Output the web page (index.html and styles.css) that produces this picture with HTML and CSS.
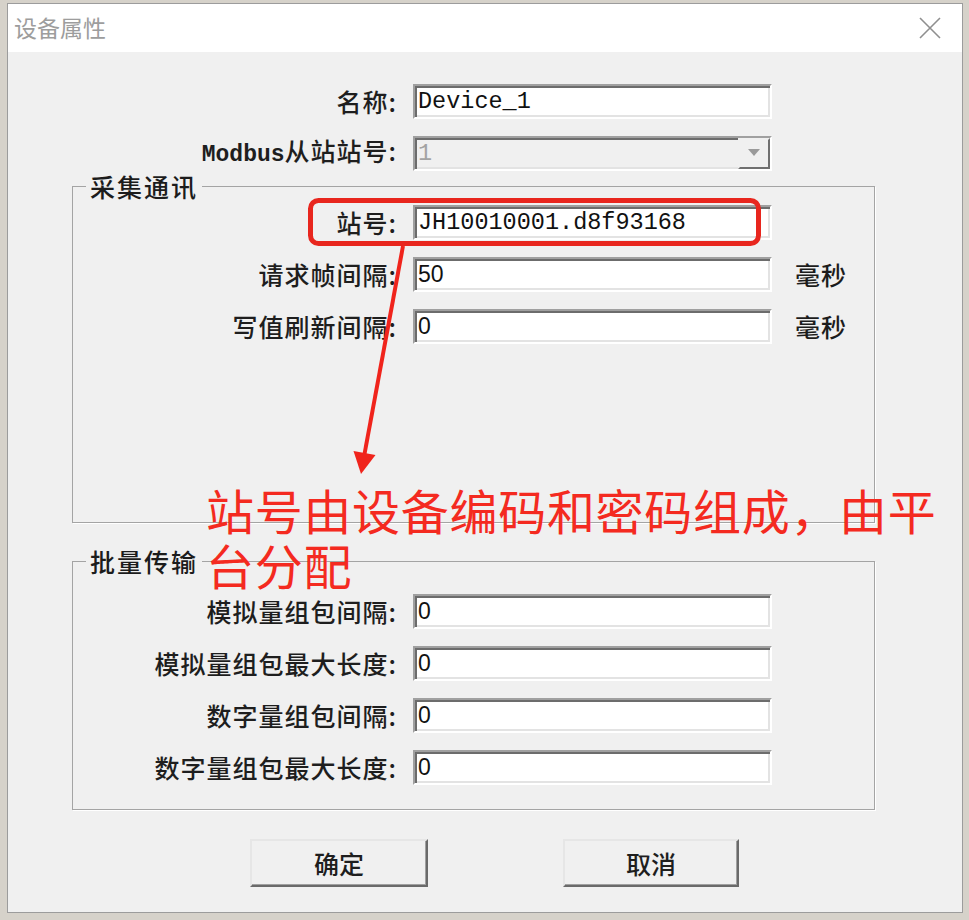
FILE: index.html
```html
<!DOCTYPE html>
<html>
<head>
    <meta charset="utf-8">
    <link rel="stylesheet" href="styles.css">
</head>
<body>
    <div class="dialog">
        <div class="title-bar">
            <span class="title">设备属性</span>
            <svg class="close" width="24" height="24" viewBox="0 0 24 24">
                <path d="M2 2 L22 22 M22 2 L2 22"></path>
            </svg>
        </div>

        <div class="dialog-body">
            <div class="row">
                <label class="label">名称:</label>
                <div class="field mono">Device_1</div>
            </div>
            <div class="row row-combo">
                <label class="label"><span class="latin">Modbus</span>从站站号:</label>
                <div class="field combo">
                    <span class="mono">1</span>
                    <span class="drop-btn">
                        <svg width="12" height="8" viewBox="0 0 12 8"><path d="M0 0 H12 L6 7 Z"></path></svg>
                    </span>
                </div>
            </div>

            <fieldset class="group group-comm">
                <legend>采集通讯</legend>
                <div class="row">
                    <label class="label">站号:</label>
                    <div class="field mono">JH10010001.d8f93168</div>
                </div>
                <div class="row">
                    <label class="label">请求帧间隔:</label>
                    <div class="field num">50</div>
                    <span class="unit">毫秒</span>
                </div>
                <div class="row">
                    <label class="label">写值刷新间隔:</label>
                    <div class="field num">0</div>
                    <span class="unit">毫秒</span>
                </div>
            </fieldset>

            <fieldset class="group group-batch">
                <legend>批量传输</legend>
                <div class="row">
                    <label class="label">模拟量组包间隔:</label>
                    <div class="field num">0</div>
                </div>
                <div class="row">
                    <label class="label">模拟量组包最大长度:</label>
                    <div class="field num">0</div>
                </div>
                <div class="row">
                    <label class="label">数字量组包间隔:</label>
                    <div class="field num">0</div>
                </div>
                <div class="row">
                    <label class="label">数字量组包最大长度:</label>
                    <div class="field num">0</div>
                </div>
            </fieldset>

            <div class="buttons">
                <button class="btn btn-ok">确定</button>
                <button class="btn btn-cancel">取消</button>
            </div>
        </div>

        <!-- red markup drawn over the dialog -->
        <svg class="marks" width="956" height="910" viewBox="0 0 956 910">
            <rect x="302.5" y="196.5" width="448" height="43" rx="8" ry="8"></rect>
            <line x1="395" y1="242" x2="356.5" y2="450"></line>
            <polygon points="353,470 367.5,451 345.5,447"></polygon>
        </svg>
        <div class="note">站号由设备编码和密码组成，由平台分配</div>
    </div>
</body>
</html>
```

FILE: styles.css
```css
* {
    margin: 0;
    padding: 0;
    box-sizing: border-box;
}

body {
    width: 969px;
    height: 920px;
    overflow: hidden;
    background: #d6d2ca;
    font-family: "Noto Sans CJK SC", "Noto Sans", sans-serif;
    color: #1c1c1c;
}

.dialog {
    position: relative;
    margin: 3px 0 0 7px;
    width: 956px;
    height: 910px;
    background: #f0f0f0;
    border: 1px solid #9c9c9c;
}

.title-bar {
    height: 48px;
    background: #fff;
    display: flex;
    align-items: center;
    justify-content: space-between;
    padding: 0 20px 0 6px;
}

.title {
    font-size: 23px;
    color: #9d9d9d;
    line-height: 1;
    margin-top: -2px;
}

.close path {
    stroke: #8f8f8f;
    stroke-width: 1.6;
    fill: none;
}

.dialog-body {
    padding-top: 32px;
    --label-w: 389px;
}

.row {
    display: grid;
    grid-template-columns: var(--label-w) 359px auto;
    column-gap: 16px;
    align-items: center;
    height: 35px;
}

.row-combo {
    margin-top: 14px;
}

.label {
    text-align: right;
    font-size: 25px;
    font-weight: 500;
    letter-spacing: 1px;
    line-height: 35px;
    color: #1e1e1e;
    white-space: nowrap;
}

.latin {
    font-family: "Liberation Mono", monospace;
    font-weight: 700;
    font-size: 23px;
    letter-spacing: 0;
}

.field {
    height: 35px;
    background: #fff;
    border: 2px solid;
    border-color: #a0a0a0 #fff #fff #a0a0a0;
    box-shadow: inset 2px 2px 0 #6c6c6c, inset -2px -2px 0 #e3e3e3;
    padding-left: 3px;
    line-height: 31px;
    color: #111;
    white-space: nowrap;
    overflow: hidden;
}

.mono {
    font-family: "Liberation Mono", monospace;
    font-size: 23.5px;
}

.num {
    font-family: "Liberation Sans", sans-serif;
    font-size: 23px;
}

.combo {
    background: #f0f0f0;
    display: flex;
    justify-content: space-between;
    color: #a3a3a3;
}

.drop-btn {
    width: 32px;
    height: 31px;
    border: 2px solid;
    border-color: #f0f0f0 #707070 #707070 #f0f0f0;
    background: #f0f0f0;
    display: flex;
    align-items: center;
    justify-content: center;
}

.drop-btn path {
    fill: #9a9a9a;
}

.unit {
    padding-left: 7px;
    font-size: 25px;
    font-weight: 500;
    letter-spacing: 1px;
    line-height: 35px;
}

.group {
    margin-left: 64px;
    width: 803px;
    border: 1px solid #a4a4a4;
    box-shadow: 1px 1px 0 #fff;
    --label-w: 324px;
    display: flex;
    flex-direction: column;
    gap: 17px;
}

.group legend {
    margin-left: 13px;
    padding: 0 4px;
    font-size: 25px;
    font-weight: 500;
    letter-spacing: 2px;
    line-height: 26px;
}

.group-comm {
    margin-top: 5px;
    padding: 6px 0 178px;
}

.group-batch {
    margin-top: 25px;
    padding: 20px 0 24px;
}

.buttons {
    display: flex;
    gap: 135px;
    margin-top: 29px;
    padding-left: 242px;
}

.btn {
    height: 48px;
    width: 178px;
    background: #f0f0f0;
    border: 2px solid;
    border-color: #e6e6e6 #6a6a6a #6a6a6a #e6e6e6;
    box-shadow: inset -1px -1px 0 #a0a0a0;
    font-family: "Noto Sans CJK SC", sans-serif;
    font-size: 25px;
    font-weight: 500;
    color: #1e1e1e;
}

.btn-cancel {
    width: 176px;
}

.marks {
    position: absolute;
    left: 0;
    top: 0;
    pointer-events: none;
}

.marks rect {
    fill: none;
    stroke: #e8261e;
    stroke-width: 5;
}

.marks line {
    stroke: #f0241c;
    stroke-width: 4;
}

.marks polygon {
    fill: #f0241c;
}

.note {
    position: absolute;
    left: 198px;
    top: 478px;
    width: 745px;
    font-size: 48px;
    letter-spacing: 0.7px;
    line-height: 55px;
    color: #f42a20;
}
```
